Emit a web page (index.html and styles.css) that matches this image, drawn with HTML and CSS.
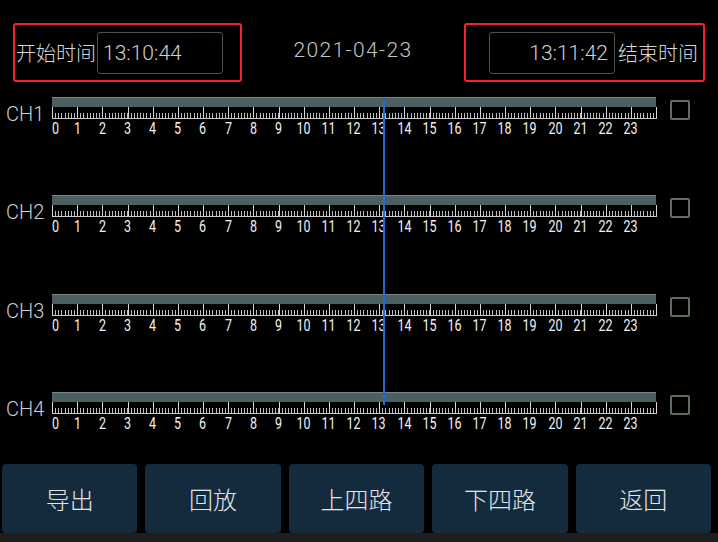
FILE: index.html
```html
<!DOCTYPE html>
<html lang="zh">
<head>
<meta charset="utf-8">
<title>回放</title>
<link rel="stylesheet" href="styles.css">
</head>
<body>
<div class="screen">
  <header class="top">
    <div class="range range-start">
      <span class="lbl">开始时间</span>
      <div class="time">13:10:44</div>
    </div>
    <div class="date">2021-04-23</div>
    <div class="range range-end">
      <div class="time time-right">13:11:42</div>
      <span class="lbl">结束时间</span>
    </div>
  </header>

  <main class="channels">
    <div class="cursor" style="left:383px"></div>

    <div class="row">
      <div class="ch">CH1</div>
      <div class="timeline">
        <div class="bar"></div>
        <div class="ruler"></div>
        <div class="hours"><span>0</span><span>1</span><span>2</span><span>3</span><span>4</span><span>5</span><span>6</span><span>7</span><span>8</span><span>9</span><span>10</span><span>11</span><span>12</span><span>13</span><span>14</span><span>15</span><span>16</span><span>17</span><span>18</span><span>19</span><span>20</span><span>21</span><span>22</span><span>23</span></div>
      </div>
      <div class="check"></div>
    </div>

    <div class="row">
      <div class="ch">CH2</div>
      <div class="timeline">
        <div class="bar"></div>
        <div class="ruler"></div>
        <div class="hours"><span>0</span><span>1</span><span>2</span><span>3</span><span>4</span><span>5</span><span>6</span><span>7</span><span>8</span><span>9</span><span>10</span><span>11</span><span>12</span><span>13</span><span>14</span><span>15</span><span>16</span><span>17</span><span>18</span><span>19</span><span>20</span><span>21</span><span>22</span><span>23</span></div>
      </div>
      <div class="check"></div>
    </div>

    <div class="row">
      <div class="ch">CH3</div>
      <div class="timeline">
        <div class="bar"></div>
        <div class="ruler"></div>
        <div class="hours"><span>0</span><span>1</span><span>2</span><span>3</span><span>4</span><span>5</span><span>6</span><span>7</span><span>8</span><span>9</span><span>10</span><span>11</span><span>12</span><span>13</span><span>14</span><span>15</span><span>16</span><span>17</span><span>18</span><span>19</span><span>20</span><span>21</span><span>22</span><span>23</span></div>
      </div>
      <div class="check"></div>
    </div>

    <div class="row">
      <div class="ch">CH4</div>
      <div class="timeline">
        <div class="bar"></div>
        <div class="ruler"></div>
        <div class="hours"><span>0</span><span>1</span><span>2</span><span>3</span><span>4</span><span>5</span><span>6</span><span>7</span><span>8</span><span>9</span><span>10</span><span>11</span><span>12</span><span>13</span><span>14</span><span>15</span><span>16</span><span>17</span><span>18</span><span>19</span><span>20</span><span>21</span><span>22</span><span>23</span></div>
      </div>
      <div class="check"></div>
    </div>
  </main>

  <footer class="actions">
    <button class="btn">导出</button>
    <button class="btn">回放</button>
    <button class="btn">上四路</button>
    <button class="btn">下四路</button>
    <button class="btn">返回</button>
  </footer>
  <div class="strip"></div>
</div>
</body>
</html>
```

FILE: styles.css
```css
* { box-sizing: border-box; }

html, body {
  margin: 0;
  padding: 0;
  background: #000;
}

.screen {
  width: 718px;
  height: 542px;
  display: flex;
  flex-direction: column;
  background: #000;
  font-family: Roboto, "Noto Sans CJK SC", sans-serif;
  color: #cfcfcf;
  overflow: hidden;
}

/* ---------- header ---------- */
.top {
  height: 97px;
  padding: 23px 13px 0 13px;
  display: flex;
  justify-content: space-between;
  align-items: flex-start;
}

.range {
  height: 59px;
  border: 2px solid #fa2222;
  border-radius: 3px;
  display: flex;
  align-items: center;
}

.range-start {
  width: 229px;
  padding-left: 1px;
}

.range-end {
  width: 241px;
  padding-left: 23px;
}

.lbl {
  font-family: "Noto Sans CJK SC", sans-serif;
  font-weight: 300;
  font-size: 20px;
  line-height: 24px;
  color: #d8d8d8;
}

.range-start .lbl { margin-right: 1px; }
.range-end .lbl { margin-left: 3px; }

.time {
  width: 126px;
  height: 42px;
  border: 1px solid #4f5244;
  border-radius: 3px;
  display: flex;
  align-items: center;
  padding-left: 5px;
  font-family: Roboto, sans-serif;
  font-weight: 300;
  font-size: 21px;
  color: #cfcfcf;
}

.time-right {
  justify-content: flex-end;
  padding: 0 6px 0 0;
}

.date {
  margin-top: 15px;
  font-family: Roboto, sans-serif;
  font-weight: 300;
  font-size: 21px;
  letter-spacing: 1.4px;
  color: #c4c4c4;
}

/* ---------- channels ---------- */
.channels {
  flex: 1;
  position: relative;
  display: flex;
  flex-direction: column;
  gap: 58.33px;
}

.cursor {
  position: absolute;
  top: 0;
  width: 2px;
  height: 308px;
  background: #1f6fd1;
  z-index: 2;
}

.row {
  display: flex;
  align-items: flex-start;
  height: 40px;
}

.ch {
  width: 52px;
  padding-left: 6px;
  margin-top: 7px;
  font-family: Roboto, sans-serif;
  font-weight: 300;
  font-size: 20px;
  line-height: 20px;
  color: #d0d0d0;
}

.timeline {
  width: 605px;
  display: flex;
  flex-direction: column;
}

.bar {
  height: 10px;
  width: 604px;
  background: #4c5f63;
  border-top: 1px solid #75878a;
}

.ruler {
  height: 12px;
  width: 605px;
  background-image:
    linear-gradient(#c9c9c9, #c9c9c9),
    repeating-linear-gradient(90deg, #d6d6d6 0 1px, transparent 1px 25.1667px),
    repeating-linear-gradient(90deg, #bdbdbd 0 1px, transparent 1px 3.1458px);
  background-size: 605px 1px, 605px 12px, 605px 6px;
  background-position: left bottom, left top, left bottom;
  background-repeat: no-repeat;
}

.hours {
  display: flex;
  width: 604px;
  margin-left: -12.583px;
  margin-top: 2px;
  height: 16px;
}

.hours span {
  width: 25.1667px;
  flex: none;
  text-align: center;
  font-family: Roboto, sans-serif;
  font-size: 16px;
  line-height: 16px;
  color: #f2f2f2;
  transform: scaleX(0.78);
}

.hours span:first-child {
  transform: translateX(4px) scaleX(0.78);
}

.check {
  width: 20px;
  height: 20px;
  margin-left: 13px;
  margin-top: 3px;
  border: 2px solid #5b6b6e;
  border-radius: 2px;
}

/* ---------- footer ---------- */
.actions {
  height: 69px;
  display: flex;
  gap: 8px;
  padding: 0 7px 0 2px;
}

.btn {
  flex: 1;
  border: none;
  border-radius: 4px;
  background: #142a3d;
  color: #e4e4e4;
  font-family: "Noto Sans CJK SC", sans-serif;
  font-weight: 300;
  font-size: 24px;
  padding: 0;
  cursor: pointer;
}

.strip {
  height: 9px;
  background: #1e1e1e;
}
```
